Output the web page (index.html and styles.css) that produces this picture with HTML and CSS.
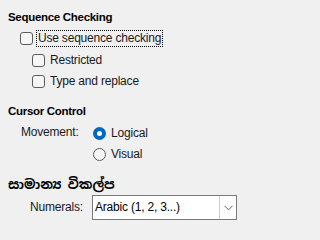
FILE: index.html
```html
<!DOCTYPE html>
<html lang="en">
<head>
<meta charset="utf-8">
<title>Options</title>
<link rel="stylesheet" href="styles.css">
</head>
<body>
<div class="panel">
  <section class="group">
    <h2 class="heading">Sequence Checking</h2>
    <label class="row check-row">
      <span class="box"></span><span class="text focused">Use sequence checking</span>
    </label>
    <div class="sub">
      <label class="row check-row">
        <span class="box"></span><span class="text">Restricted</span>
      </label>
      <label class="row check-row">
        <span class="box"></span><span class="text">Type and replace</span>
      </label>
    </div>
  </section>

  <section class="group group-cursor">
    <h2 class="heading">Cursor Control</h2>
    <div class="field">
      <span class="field-label">Movement:</span>
      <div class="radios">
        <label class="row radio-row">
          <span class="radio checked"></span><span class="text">Logical</span>
        </label>
        <label class="row radio-row">
          <span class="radio"></span><span class="text">Visual</span>
        </label>
      </div>
    </div>
  </section>

  <section class="group group-general">
    <h2 class="heading heading-si">සාමාන්‍ය විකල්ප</h2>
    <div class="field field-select">
      <span class="field-label numerals">Numerals:</span>
      <div class="select">
        <span class="select-value">Arabic (1, 2, 3...)</span>
        <span class="select-btn">
          <svg width="9" height="6" viewBox="0 0 9 6"><path d="M0.5 0.8 L4.5 4.8 L8.5 0.8" fill="none" stroke="#6a6a6a" stroke-width="1"/></svg>
        </span>
      </div>
    </div>
  </section>
</div>
</body>
</html>
```

FILE: styles.css
```css
html, body {
  margin: 0;
  padding: 0;
  background: #f0f0f0;
}

body {
  font-family: "Liberation Sans", "Noto Sans", "Noto Sans Sinhala", sans-serif;
  font-size: 12px;
  letter-spacing: -0.2px;
  color: #1a1a1a;
}

.panel {
  padding: 9px 8px 0 8px;
  display: flex;
  flex-direction: column;
}

.group {
  display: flex;
  flex-direction: column;
}

.heading {
  margin: 0;
  font-size: 11.5px;
  font-weight: bold;
  letter-spacing: -0.3px;
  line-height: 16px;
  height: 16px;
  color: #000;
}

.group-cursor {
  margin-top: 10.5px;
}

.group-general {
  margin-top: 12px;
}

.heading-si {
  font-size: 13px;
  letter-spacing: 0;
  font-family: "Noto Sans Sinhala", "Iskoola Pota", "Liberation Sans", sans-serif;
}

.row {
  display: flex;
  align-items: center;
  height: 21.5px;
}

.check-row {
  margin-top: 2.75px;
  padding-left: 12px;
}

.sub .check-row {
  margin-top: 0;
  padding-left: 24px;
}

.box {
  width: 11px;
  height: 11px;
  border: 1px solid #5c5c5c;
  border-radius: 3px;
  background: #f6f6f6;
  flex: none;
}

.text {
  line-height: 15px;
  padding: 0 1px;
  border: 1px dotted transparent;
}

.check-row .text {
  margin-left: 3px;
}

.focused {
  border-color: #000;
}

.field {
  display: flex;
  align-items: flex-start;
}

.field-label {
  height: 21.5px;
  line-height: 21.5px;
  margin-top: 3.5px;
  margin-left: 13px;
  width: 72px;
  flex: none;
  color: #1a1a1a;
}

.radios {
  display: flex;
  flex-direction: column;
  margin-top: 3.5px;
}

.radio {
  width: 11px;
  height: 11px;
  border: 1px solid #5c5c5c;
  border-radius: 50%;
  background: #f6f6f6;
  flex: none;
}

.radio.checked {
  width: 13px;
  height: 13px;
  border: none;
  background: #0067c0;
  display: flex;
  align-items: center;
  justify-content: center;
}

.radio.checked::after {
  content: "";
  width: 5px;
  height: 5px;
  border-radius: 50%;
  background: #fff;
}

.radio-row .text {
  margin-left: 3px;
}

.field-select {
  margin-top: 2px;
  align-items: center;
}

.numerals {
  height: 25px;
  line-height: 25px;
  margin-top: 0;
  margin-left: 22px;
  width: 62px;
}

.select {
  width: 145px;
  height: 25px;
  box-sizing: border-box;
  border: 1px solid #7a7a7a;
  background: #fff;
  display: flex;
  align-items: stretch;
}

.select-value {
  flex: 1;
  line-height: 23px;
  padding-left: 2px;
  color: #000;
}

.select-btn {
  width: 16px;
  border-left: 1px solid #cfcfcf;
  background: #fdfdfd;
  display: flex;
  align-items: center;
  justify-content: center;
}
```
